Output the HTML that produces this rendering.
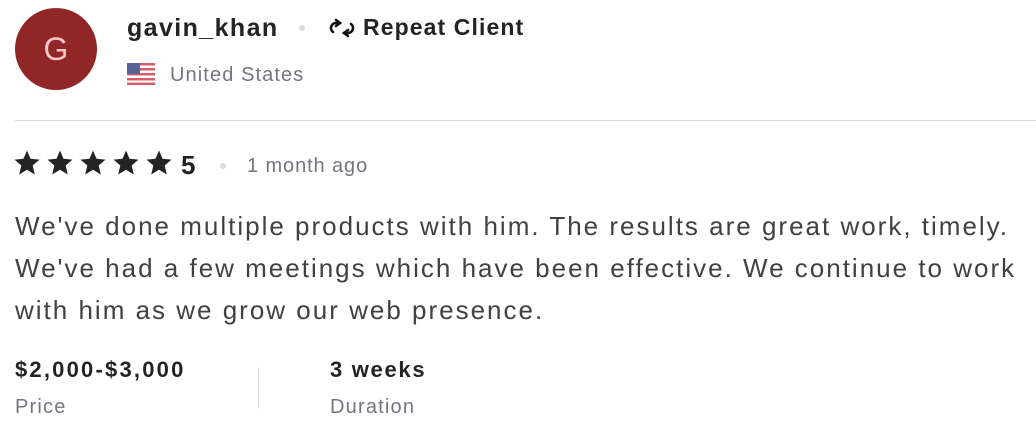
<!DOCTYPE html>
<html><head><meta charset="utf-8"><style>
html,body{margin:0;padding:0;background:#fff;width:1036px;height:428px;overflow:hidden;font-family:"Liberation Sans",sans-serif;}
.a{position:absolute;white-space:nowrap}
</style></head><body>
<div class="a" style="left:15px;top:8px;width:82px;height:82px;border-radius:50%;background:#912626;color:#ffc6c6;font-size:32px;line-height:82px;text-align:center">G</div>
<div class="a" style="left:127px;top:12px;font-size:25px;font-weight:bold;color:#222325;line-height:32px;letter-spacing:1.4px">gavin_khan</div>
<div class="a" style="left:299px;top:25px;width:6px;height:6px;border-radius:50%;background:#dadbdd"></div>
<svg class="a" style="left:327px;top:15px" width="30" height="26" viewBox="0 0 30 26" fill="none" stroke="#111" stroke-width="2.6" stroke-linecap="round">
<path d="M9 5 L13 8 L9 11"/><path d="M13 8 H9 A5 5 0 0 0 6 17"/>
<path d="M21 21 L17 18 L21 15"/><path d="M17 18 H21 A5 5 0 0 0 24 9"/></svg>
<div class="a" style="left:363px;top:12px;font-size:23px;font-weight:bold;color:#222325;line-height:30px;letter-spacing:1.1px">Repeat Client</div>
<svg class="a" style="left:127px;top:63px" width="28" height="22" viewBox="0 0 28 22">
<rect width="28" height="22" rx="3" fill="#fff"/>
<g fill="#d2606a"><rect y="0" width="28" height="2.5"/><rect y="5" width="28" height="2.5"/><rect y="10" width="28" height="2.5"/><rect y="15" width="28" height="2.5"/><rect y="19.5" width="28" height="2.5"/></g>
<rect width="13" height="11" fill="#5a6396"/></svg>
<div class="a" style="left:170px;top:62px;font-size:20px;color:#74767e;line-height:26px;letter-spacing:1.1px">United States</div>
<div class="a" style="left:15px;top:120px;width:1021px;height:1px;background:#dadbdd"></div>
<svg class="a" style="left:14px;top:150px" width="164" height="28" viewBox="0 0 164 28" fill="#222325">
<defs><path id="s" d="M13 0.5 L16.5 8.8 L25.5 9.6 L18.7 15.5 L20.8 24.5 L13 19.8 L5.2 24.5 L7.3 15.5 L0.5 9.6 L9.5 8.8 Z"/></defs>
<use href="#s"/><use href="#s" x="33"/><use href="#s" x="66"/><use href="#s" x="99"/><use href="#s" x="132"/></svg>
<div class="a" style="left:181px;top:150px;font-size:26px;font-weight:bold;color:#222325;line-height:30px">5</div>
<div class="a" style="left:220px;top:163px;width:6px;height:6px;border-radius:50%;background:#dadbdd"></div>
<div class="a" style="left:247px;top:153px;font-size:20px;color:#74767e;line-height:26px;letter-spacing:0.9px">1 month ago</div>
<div class="a" style="left:15px;top:205px;font-size:26px;color:#404145;line-height:42px;letter-spacing:2px">We've done multiple products with him. The results are great work, timely.<br>We've had a few meetings which have been effective. We continue to work<br>with him as we grow our web presence.</div>
<div class="a" style="left:15px;top:356px;font-size:22px;font-weight:bold;color:#222325;line-height:28px;letter-spacing:2.2px">$2,000-$3,000</div>
<div class="a" style="left:15px;top:394px;font-size:20px;color:#74767e;line-height:26px;letter-spacing:1.2px">Price</div>
<div class="a" style="left:258px;top:367px;width:1px;height:42px;background:#dadbdd"></div>
<div class="a" style="left:330px;top:356px;font-size:22px;font-weight:bold;color:#222325;line-height:28px;letter-spacing:1.7px">3 weeks</div>
<div class="a" style="left:330px;top:394px;font-size:20px;color:#74767e;line-height:26px;letter-spacing:1.2px">Duration</div>
</body></html>
